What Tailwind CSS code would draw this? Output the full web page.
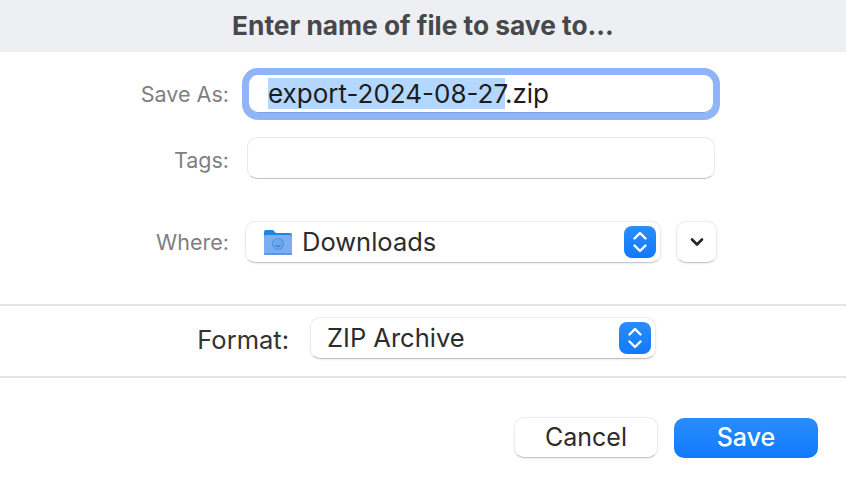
<!DOCTYPE html>
<html lang="en">
<head>
    <meta charset="UTF-8">
    <title>Save dialog</title>
    <script src="https://cdn.jsdelivr.net/npm/@tailwindcss/browser@4"></script>
</head>
<body class="bg-white font-['Inter',sans-serif] antialiased overflow-hidden">
<div class="w-[846px] h-[480px] flex flex-col">

    <!-- Title -->
    <header class="h-[52px] bg-[#eeeff3] flex items-center justify-center text-[26.3px] font-bold text-[#47484b]">
        Enter name of file to save to...
    </header>

    <!-- Save As -->
    <div class="mt-4 flex items-center h-[52px]">
        <label class="w-[229px] text-right text-[21.5px] text-[#7f7f7f]">Save As:</label>
        <div class="ml-[13px] w-[478px] h-[52px] rounded-[16px] border-[7px] border-[#8fb5f7] shadow-[inset_0_-1px_0_#7aa3ec] bg-white flex items-center pl-[19px]">
            <span class="text-[26px] leading-[32px] text-[#1c1c1c]"><span class="bg-[#b3d7ff]">export-2024-08-27</span>.zip</span>
        </div>
    </div>

    <!-- Tags -->
    <div class="mt-[17px] flex items-center h-[42px]">
        <label class="w-[229px] text-right text-[21.5px] text-[#7f7f7f] mt-[5px]">Tags:</label>
        <div class="ml-[18px] w-[468px] h-[42px] rounded-[10px] border border-[#e8e8e8] border-b-[#c4c4c4] bg-white"></div>
    </div>

    <!-- Where -->
    <div class="mt-[42px] flex items-center h-[42px]">
        <label class="w-[229px] text-right text-[21.5px] text-[#7f7f7f]">Where:</label>
        <div class="ml-[16px] w-[416px] h-[42px] rounded-[10px] border border-[#ececec] border-b-[#c8c8c8] shadow-[0_1px_2px_rgba(0,0,0,0.08)] bg-white flex items-center pl-[17px] pr-[4px]">
            <svg class="w-[30px] h-[28px] shrink-0" viewBox="0 0 30 28">
                <path d="M1 4a2 2 0 0 1 2-2h7l3 3h14a2 2 0 0 1 2 2v4H1z" fill="#1f86e0"/>
                <rect x="1" y="7" width="28" height="20" rx="2" fill="#7aaef2"/>
                <rect x="1" y="25" width="28" height="2" rx="1" fill="#5c97e6"/>
                <circle cx="15" cy="16" r="5.5" fill="#6ba8ee" stroke="#4f94e4" stroke-width="1.2"/>
                <path d="M12.5 17a3 3 0 0 0 5 0" fill="none" stroke="#2f7bdc" stroke-width="1.2"/>
            </svg>
            <span class="ml-[9px] text-[25.5px] text-[#2c2c2c]">Downloads</span>
            <div class="ml-auto w-[32px] h-[32px] rounded-[8px] bg-gradient-to-b from-[#2a8dfd] to-[#0f7afb] flex items-center justify-center">
                <svg class="w-[16px] h-[24px]" viewBox="0 0 16 24" fill="none" stroke="white" stroke-width="2.4" stroke-linecap="round" stroke-linejoin="round">
                    <path d="M2.5 8.5 8 3l5.5 5.5"/>
                    <path d="M2.5 15.5 8 21l5.5-5.5"/>
                </svg>
            </div>
        </div>
        <div class="ml-[15px] w-[41px] h-[42px] rounded-[10px] border border-[#ececec] border-b-[#c8c8c8] shadow-[0_1px_2px_rgba(0,0,0,0.08)] bg-white flex items-center justify-center">
            <svg class="w-[14px] h-[10px]" viewBox="0 0 14 10" fill="none" stroke="#262626" stroke-width="2.6" stroke-linecap="round" stroke-linejoin="round">
                <path d="M2 2.5 7 7.5l5-5"/>
            </svg>
        </div>
    </div>

    <!-- Format -->
    <div class="mt-[41px] h-[74px] border-y-2 border-[#e5e5e7] flex items-start pt-[11px]">
        <label class="w-[289px] text-right text-[25.5px] leading-[42px] mt-[2px] text-[#333333]">Format:</label>
        <div class="ml-[21px] w-[346px] h-[42px] rounded-[10px] border border-[#ececec] border-b-[#c0c0c0] shadow-[0_1px_2px_rgba(0,0,0,0.08)] bg-white flex items-center pl-[16px] pr-[4px]">
            <span class="text-[25.5px] text-[#2c2c2c]">ZIP Archive</span>
            <div class="ml-auto w-[32px] h-[32px] rounded-[8px] bg-gradient-to-b from-[#2a8dfd] to-[#0f7afb] flex items-center justify-center">
                <svg class="w-[16px] h-[24px]" viewBox="0 0 16 24" fill="none" stroke="white" stroke-width="2.4" stroke-linecap="round" stroke-linejoin="round">
                    <path d="M2.5 8.5 8 3l5.5 5.5"/>
                    <path d="M2.5 15.5 8 21l5.5-5.5"/>
                </svg>
            </div>
        </div>
    </div>

    <!-- Buttons -->
    <div class="mt-[39px] flex justify-end pr-[28px] gap-[16px]">
        <button class="w-[144px] h-[41px] rounded-[10px] border border-[#ececec] border-b-[#c4c4c4] shadow-[0_1px_2px_rgba(0,0,0,0.08)] bg-white text-[25px] text-[#2c2c2c]">Cancel</button>
        <button class="w-[144px] h-[40px] mt-px rounded-[10px] bg-gradient-to-b from-[#2a8dfd] to-[#0f7afb] text-[25px] font-medium text-white">Save</button>
    </div>
</div>
</body>
</html>
